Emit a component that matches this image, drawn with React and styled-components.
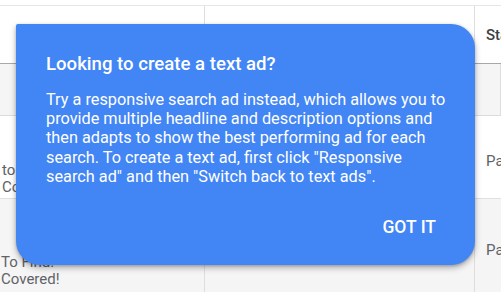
import styled, { createGlobalStyle } from 'styled-components';

const GlobalStyle = createGlobalStyle`
  html, body {
    margin: 0;
    padding: 0;
    background: #fff;
    font-family: Roboto, "Liberation Sans", Arial, sans-serif;
  }
`;

const rows = [
  { lines: ['to Find.', 'Covered!'], status: 'Paused', shade: false },
  { lines: ['To Find.', 'Covered!'], status: 'Paused', shade: true },
];

export default function App() {
  return (
    <>
      <GlobalStyle />
      <Page>
        <TopStrip />
        <HeaderRow>
          <Cell />
          <Cell />
          <HeadCell>Status</HeadCell>
        </HeaderRow>
        <TotalRow>
          <Cell />
          <Cell />
          <Cell />
        </TotalRow>
        {rows.map((row, i) => (
          <BodyRow key={i} $shade={row.shade} $first={i === 0}>
            <AdCell $first={i === 0}>
              {row.lines.map((l) => (
                <span key={l}>{l}</span>
              ))}
            </AdCell>
            <Cell />
            <StatusCell>{row.status}</StatusCell>
          </BodyRow>
        ))}

        <Popup role="dialog">
          <Title>Looking to create a text ad?</Title>
          <Body>
            Try a responsive search ad instead, which allows you to provide
            multiple headline and description options and then adapts to show
            the best performing ad for each search. To create a text ad, first
            click "Responsive search ad" and then "Switch back to text ads".
          </Body>
          <Actions>
            <GotIt>Got it</GotIt>
          </Actions>
        </Popup>
      </Page>
    </>
  );
}

const Page = styled.div`
  position: relative;
  width: 501px;
  height: 292px;
  overflow: hidden;
  background: #fff;
`;

const TopStrip = styled.div`
  height: 5px;
  border-bottom: 1px solid #e6e6e6;
`;

const Row = styled.div`
  display: grid;
  grid-template-columns: 205px 270px 1fr;
`;

const HeaderRow = styled(Row)`
  height: 57px;
  border-bottom: 1px solid #a8a8a8;
  background: #fff;
`;

const TotalRow = styled(Row)`
  height: 51px;
  background: #f5f5f5;
  border-bottom: 1px solid #dcdcdc;
`;

const BodyRow = styled(Row)`
  height: ${(p) => (p.$first ? '82px' : '94px')};
  background: ${(p) => (p.$shade ? '#f5f5f5' : '#fff')};
  border-bottom: 1px solid #e0e0e0;
`;

const Cell = styled.div`
  border-right: 1px solid #dedede;
  min-width: 0;
  overflow: hidden;
`;

const HeadCell = styled(Cell)`
  display: flex;
  align-items: center;
  padding-left: 11px;
  font-size: 15px;
  font-weight: 500;
  color: #3c4043;
  border-right: none;
`;

const AdCell = styled(Cell)`
  display: flex;
  flex-direction: column;
  padding: ${(p) => (p.$first ? '46px 0 0 2px' : '55px 0 0 1px')};
  font-size: 15px;
  line-height: 17px;
  color: #5f6368;
  white-space: nowrap;
`;

const StatusCell = styled(Cell)`
  display: flex;
  align-items: center;
  padding: 8px 0 0 11px;
  font-size: 15px;
  color: #5f6368;
  border-right: none;
`;

const Popup = styled.div`
  position: absolute;
  left: 16px;
  top: 24px;
  width: 459px;
  height: 241px;
  box-sizing: border-box;
  padding: 28px 25px 0 30px;
  display: flex;
  flex-direction: column;
  background: #4285f4;
  color: #fff;
  border-radius: 2px 24px 24px 24px;
  box-shadow: 0 3px 6px rgba(0, 0, 0, 0.28), 0 1px 3px rgba(0, 0, 0, 0.18);
`;

const Title = styled.h2`
  margin: 0;
  font-size: 18.6px;
  line-height: 24px;
  font-weight: 500;
`;

const Body = styled.p`
  margin: 14px 0 0;
  font-size: 16.3px;
  line-height: 19.2px;
  font-weight: 400;
`;

const Actions = styled.div`
  display: flex;
  justify-content: flex-end;
  margin-top: 31px;
  padding-right: 14px;
`;

const GotIt = styled.button`
  border: none;
  background: transparent;
  padding: 0;
  color: #fff;
  font-family: inherit;
  font-size: 17.5px;
  line-height: 20px;
  font-weight: 500;
  text-transform: uppercase;
  cursor: pointer;
`;
